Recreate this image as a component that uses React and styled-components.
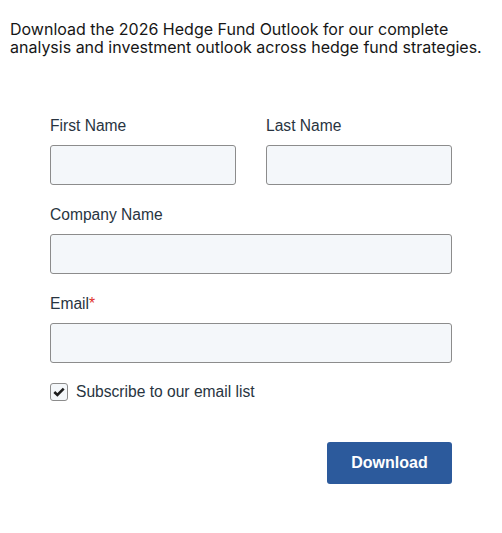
import React, { useState } from "react";
import styled, { createGlobalStyle } from "styled-components";

const GlobalStyle = createGlobalStyle`
  body {
    margin: 0;
    background: #ffffff;
    font-family: "Liberation Sans", Arial, sans-serif;
  }
`;

const Page = styled.div`
  width: 502px;
  padding: 20px 10px 0 10px;
  box-sizing: border-box;
`;

const Intro = styled.p`
  margin: 0;
  font-family: Inter, "Noto Sans", sans-serif;
  font-size: 16px;
  line-height: 18px;
  color: #161616;
`;

const Form = styled.form`
  margin: 59px 40px 0 40px;
  display: flex;
  flex-direction: column;
`;

const Row = styled.div`
  display: grid;
  grid-template-columns: minmax(0, 1fr) minmax(0, 1fr);
  column-gap: 30px;
  margin-bottom: 19px;
`;

const Field = styled.div`
  display: flex;
  flex-direction: column;
  min-width: 0;
  margin-bottom: ${props => props.$gap ?? 19}px;
`;

const Label = styled.label`
  font-size: 15.6px;
  line-height: 20px;
  color: #283441;
  padding-top: 1px;
  margin-bottom: 9px;
`;

const Required = styled.span`
  color: #e0302b;
`;

const Input = styled.input`
  width: 100%;
  min-width: 0;
  height: 40px;
  box-sizing: border-box;
  border: 1px solid #8c8c8c;
  border-radius: 3px;
  background: #f4f7fa;
  padding: 0 10px;
  font-size: 16px;
  font-family: inherit;
  outline: none;
`;

const CheckRow = styled.label`
  display: flex;
  align-items: center;
  gap: 8px;
  font-size: 15.6px;
  line-height: 20px;
  color: #283441;
  cursor: pointer;
`;

const Box = styled.span`
  width: 18px;
  height: 18px;
  box-sizing: border-box;
  border: 1px solid #8c8c8c;
  border-radius: 3px;
  background: #f4f7fa;
  display: flex;
  align-items: center;
  justify-content: center;
`;

const Actions = styled.div`
  display: flex;
  justify-content: flex-end;
  margin-top: 40px;
`;

const Button = styled.button`
  width: 125px;
  height: 42px;
  border: none;
  border-radius: 3px;
  background: #2c5a9c;
  color: #ffffff;
  font-family: "Liberation Sans", Arial, sans-serif;
  font-weight: bold;
  font-size: 16px;
  cursor: pointer;
`;

export default function App() {
  const [subscribe, setSubscribe] = useState(true);

  return (
    <Page>
      <GlobalStyle />
      <Intro>
        Download the 2026 Hedge Fund Outlook for our complete analysis and
        investment outlook across hedge fund strategies.
      </Intro>
      <Form onSubmit={e => e.preventDefault()}>
        <Row>
          <Field $gap={0}>
            <Label>First Name</Label>
            <Input type='text' />
          </Field>
          <Field $gap={0}>
            <Label>Last Name</Label>
            <Input type='text' />
          </Field>
        </Row>
        <Field>
          <Label>Company Name</Label>
          <Input type='text' />
        </Field>
        <Field>
          <Label>
            Email<Required>*</Required>
          </Label>
          <Input type='email' />
        </Field>
        <CheckRow onClick={() => setSubscribe(!subscribe)}>
          <Box>
            {subscribe && (
              <svg width='12' height='10' viewBox='0 0 12 10'>
                <path
                  d='M1.3 5 L4.4 8 L10.7 1.7'
                  fill='none'
                  stroke='#1e1e1e'
                  strokeWidth='2.6'
                />
              </svg>
            )}
          </Box>
          Subscribe to our email list
        </CheckRow>
        <Actions>
          <Button type='submit'>Download</Button>
        </Actions>
      </Form>
    </Page>
  );
}
